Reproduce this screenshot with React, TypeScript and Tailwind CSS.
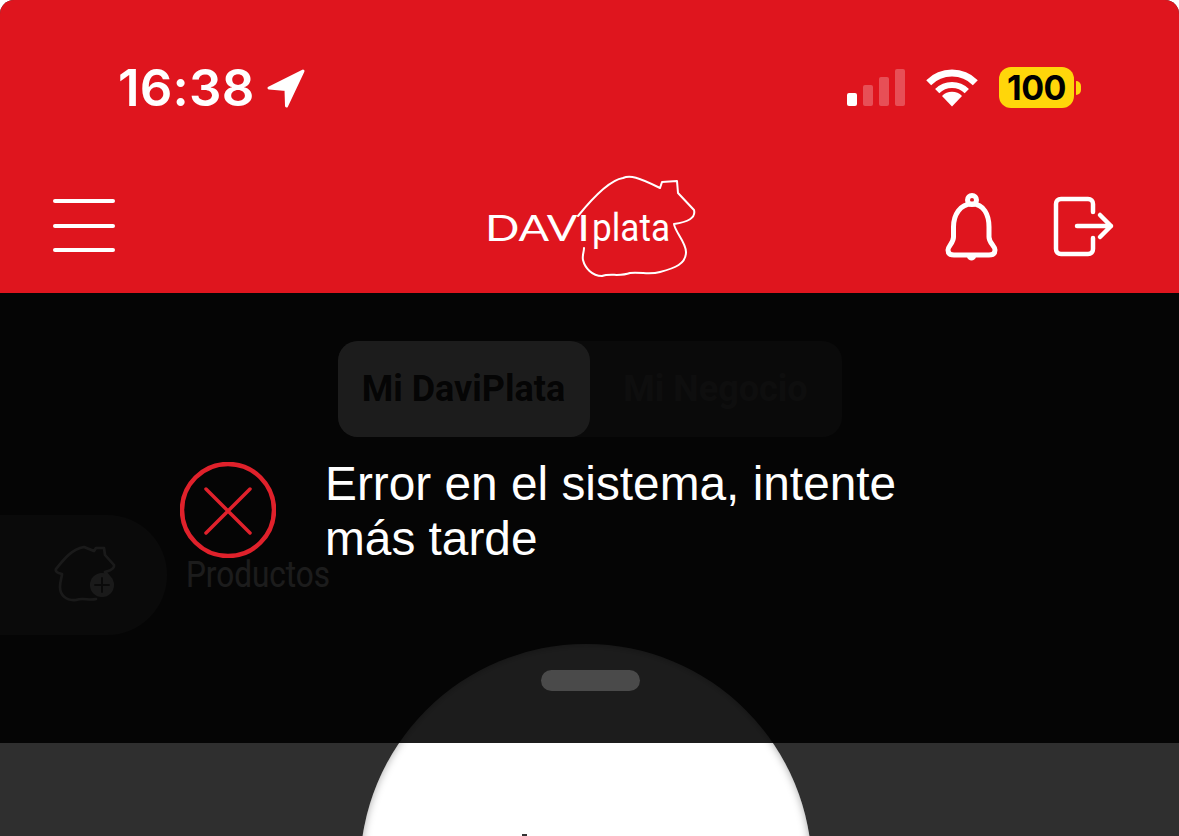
export default function App() {
  return (
    <div className="relative h-[836px] w-full overflow-hidden rounded-t-[14px] bg-[#2f2f2f] [font-family:'Liberation_Sans',sans-serif]">
      <header className="relative z-20 flex h-[293px] flex-col bg-[#df151e] text-white">
        <div className="flex h-[41px] items-center justify-between pl-[118px] pr-[98px] mt-[67px]">
          <div className="flex items-center gap-[11px]">
            <span className="text-[51px] font-semibold leading-none tracking-[0.2px] [font-family:Inter,sans-serif]">16:38</span>
            <svg width="40" height="40" viewBox="0 0 40 40">
              <path d="M37 3 L3 20 L20 21.5 L20.5 38 Z" fill="#fff" stroke="#fff" strokeWidth="3" strokeLinejoin="round" />
            </svg>
          </div>
          <div className="flex items-center">
            <div className="flex h-[37px] items-end gap-[6px]">
              <div className="h-[13px] w-[10px] rounded-[2px] bg-white" />
              <div className="h-[21px] w-[10px] rounded-[2px] bg-white/25" />
              <div className="h-[29px] w-[10px] rounded-[2px] bg-white/25" />
              <div className="h-[37px] w-[10px] rounded-[2px] bg-white/25" />
            </div>
            <svg className="ml-[21px]" width="52" height="38" viewBox="0 0 52 38">
              <path d="M26 37.5 L16 27 A14 14 0 0 1 36 27 Z" fill="#fff" />
              <path d="M11.2 22.2 A21 21 0 0 1 40.8 22.2" fill="none" stroke="#fff" strokeWidth="6" />
              <path d="M2.7 13.7 A33 33 0 0 1 49.3 13.7" fill="none" stroke="#fff" strokeWidth="7" />
            </svg>
            <div className="ml-[21px] flex h-[41px] w-[75px] items-center justify-center rounded-[12px] bg-[#ffd60a] text-[34px] font-bold leading-none tracking-[-0.5px] text-black [font-family:Inter,sans-serif]">
              100
            </div>
            <div className="ml-[2px] h-[14px] w-[5px] rounded-r-full bg-[#ffd60a]" />
          </div>
        </div>

        <nav className="mt-[52px] grid h-[130px] grid-cols-[1fr_240px_1fr] items-center">
          <div className="ml-[53px] mt-[1px] flex w-[62px] flex-col gap-[20.5px]">
            <div className="h-[4px] rounded-full bg-white" />
            <div className="h-[4px] rounded-full bg-white" />
            <div className="h-[4px] rounded-full bg-white" />
          </div>
          <svg width="240" height="130" viewBox="0 0 240 130" fill="none">
            <path
              d="M108 56 C125 35 140 20 153 18 C160 15 168 17 190 28 L192 22 L207 21 L208 33 L224 50 C226 58 218 62 204 64 C205 72 216 82 216 92 C216 104 205 108 190 112 C180 115 172 112 160 113 C150 117 140 113 132 116 C122 116 115 108 113 100 C112 96 114 92 114 88"
              stroke="#fff"
              strokeWidth="2"
              strokeLinecap="round"
              strokeLinejoin="round"
            />
            <text x="15" y="81" fontFamily="Lato, sans-serif" fontWeight="400" fontSize="36" fill="#fff" textLength="105" lengthAdjust="spacingAndGlyphs">
              DAVI
            </text>
            <text x="122" y="81" fontFamily="Roboto, sans-serif" fontWeight="400" fontSize="38" fill="#fff" textLength="78" lengthAdjust="spacingAndGlyphs">
              plata
            </text>
          </svg>
          <div className="flex items-center justify-end gap-[50px] pr-[63px]">
            <svg width="60" height="75" viewBox="0 0 60 75" fill="none" stroke="#fff" strokeWidth="5" className="mt-[6px]">
              <circle cx="30" cy="9" r="4.5" />
              <path d="M30 13 C18 13 11.5 24 11.5 36 V46 C11.5 52 6 55 6 59 C6 62 8 64 12 64 H47 C51 64 53 62 53 59 C53 55 47 52 47 46 V36 C47 24 42 13 30 13 Z" />
              <path d="M25 66 C26 70.5 33 70.5 34 66 Z" fill="#fff" stroke="none" />
            </svg>
            <svg width="64" height="64" viewBox="0 0 64 64" fill="none" stroke="#fff" strokeWidth="4.5" strokeLinecap="round" strokeLinejoin="round" className="mt-[4px]">
              <path d="M41 17 V9 C41 6 39 4 36 4 H9 C6 4 4 6 4 9 V54 C4 57 6 59 9 59 H36 C39 59 41 57 41 54 V43" />
              <path d="M25 31 H59 M48 20 L59 31 L48 42" />
            </svg>
          </div>
        </nav>
      </header>

      <main className="h-[450px] pt-[48px]">
        <div className="mx-auto flex h-[96px] w-[504px] rounded-[20px] bg-[#5b5b5b] text-[36px] font-bold [font-family:Roboto,sans-serif]">
          <div className="flex w-[252px] items-center justify-center rounded-[20px] bg-white text-[#2d2d2d]">Mi DaviPlata</div>
          <div className="flex w-[252px] items-center justify-center text-[#7f7f7f]">Mi Negocio</div>
        </div>
        <div className="mt-[78px] flex items-center">
          <div className="flex h-[120px] w-[167px] items-center rounded-r-full bg-[#5b5b5b] pl-[52px]">
            <svg width="66" height="60" viewBox="0 0 66 60" fill="none" stroke="#ececec" strokeWidth="2.6" strokeLinejoin="round" strokeLinecap="round">
              <path d="M4 24 C12 14 20 4 32 2 L42 6 L44 3 L52 3 L53 10 L62 20 C63 25 56 26 53 27 C58 32 60 38 59 42 M44 54 C36 56 32 52 24 55 C14 56 8 50 8 42 C8 36 10 32 10 29 C6 28 3 27 4 24" />
              <circle cx="50" cy="40" r="12" fill="#ececec" stroke="none" />
              <path d="M50 33 V47 M43 40 H57" stroke="#5b5b5b" strokeWidth="2" />
            </svg>
          </div>
          <span className="ml-[19px] origin-left scale-x-[0.875] text-[36px] leading-none text-white [font-family:Roboto,sans-serif]">Productos</span>
        </div>
      </main>

      <section className="absolute left-[360px] top-[644px] h-[452px] w-[452px] rounded-full bg-white shadow-[inset_0_0_8px_rgba(0,0,0,0.35)]">
        <div className="absolute left-[181px] top-[26px] z-20 h-[21px] w-[99px] rounded-full bg-[#4a4a4a]" />
        <div className="absolute left-[162px] top-[190px] h-[2px] w-[5px] bg-[#333]" />
      </section>

      <div className="absolute inset-x-0 top-[293px] z-10 h-[450px] bg-black/[0.89]">
        <div className="ml-[180px] mt-[169px] flex w-[760px] items-start gap-[50px]">
          <svg width="96" height="96" viewBox="0 0 96 96" fill="none" stroke="#e0212b" className="shrink-0">
            <circle cx="48" cy="48" r="46" strokeWidth="4.5" />
            <path d="M26 27 L70 71 M70 27 L26 71" strokeWidth="3.5" strokeLinecap="round" />
          </svg>
          <p className="-ml-[1px] -mt-[6px] w-[610px] text-[47.8px] leading-[55px] text-white">Error en el sistema, intente más tarde</p>
        </div>
      </div>
    </div>
  );
}
